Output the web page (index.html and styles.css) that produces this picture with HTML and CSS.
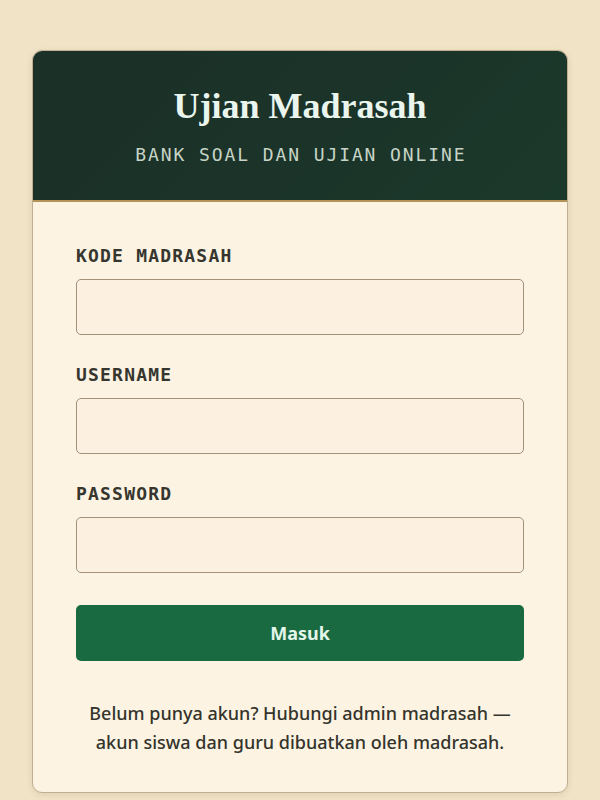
FILE: index.html
```html
<!DOCTYPE html>
<html lang="id">
<head>
<meta charset="utf-8">
<title>Ujian Madrasah</title>
<link rel="stylesheet" href="styles.css">
</head>
<body>
<main class="page">
  <section class="card">
    <header class="card-head">
      <h1 class="title">Ujian Madrasah</h1>
      <p class="subtitle">BANK SOAL DAN UJIAN ONLINE</p>
    </header>
    <form class="card-body">
      <div class="field">
        <label class="label" for="kode">KODE MADRASAH</label>
        <input class="input" id="kode" type="text">
      </div>
      <div class="field">
        <label class="label" for="user">USERNAME</label>
        <input class="input" id="user" type="text">
      </div>
      <div class="field">
        <label class="label" for="pass">PASSWORD</label>
        <input class="input" id="pass" type="password">
      </div>
      <button class="btn" type="button">Masuk</button>
      <p class="note">Belum punya akun? Hubungi admin madrasah — akun siswa dan guru dibuatkan oleh madrasah.</p>
    </form>
  </section>
</main>
</body>
</html>
```
FILE: styles.css
```css
* { box-sizing: border-box; }
html, body { margin: 0; padding: 0; }
body {
  background: #f1e4c6;
  min-height: 800px;
  font-family: "Noto Sans", "DejaVu Sans", sans-serif;
}
.page {
  padding: 50px 32px 8px;
}
.card {
  width: 536px;
  background: #fcf3e2;
  border: 1px solid #bfae90;
  border-radius: 10px;
  overflow: hidden;
  box-shadow: 0 2px 6px rgba(90, 70, 30, 0.12);
}
.card-head {
  background: linear-gradient(135deg, #1b3027 0%, #1b3429 60%, #1b392b 100%);
  border-bottom: 2px solid #b39456;
  padding: 33px 20px 35px;
  text-align: center;
}
.title {
  margin: 0;
  font-family: "Liberation Serif", "Times New Roman", serif;
  font-weight: bold;
  font-size: 36px;
  line-height: 44px;
  color: #eaf5ee;
}
.subtitle {
  margin: 17px 0 0;
  font-family: "DejaVu Sans Mono", "Liberation Mono", monospace;
  font-size: 18px;
  line-height: 20px;
  letter-spacing: 1.9px;
  padding-left: 1.9px;
  color: #c6d4c6;
}
.card-body {
  padding: 43px 43px 35px 43px;
  display: flex;
  flex-direction: column;
}
.field {
  display: flex;
  flex-direction: column;
  gap: 12px;
  margin-bottom: 29px;
}
.field:nth-of-type(3) { margin-bottom: 32px; }
.label {
  font-family: "DejaVu Sans Mono", "Liberation Mono", monospace;
  font-weight: bold;
  font-size: 18px;
  line-height: 22px;
  letter-spacing: 1.2px;
  color: #36362f;
}
.input {
  height: 56px;
  width: 100%;
  background: #fcf1e0;
  border: 1.5px solid #a39178;
  border-radius: 5px;
  font-size: 16px;
  padding: 0 14px;
  outline: none;
}
.btn {
  height: 56px;
  width: 100%;
  border: none;
  border-radius: 5px;
  background: #1a6a41;
  color: #e3f6ea;
  font-family: "Noto Sans", "DejaVu Sans", sans-serif;
  font-weight: bold;
  font-size: 18px;
  cursor: pointer;
}
.note {
  margin: 38px 0 0;
  text-align: center;
  font-size: 18px;
  font-weight: 500;
  line-height: 29px;
  color: #34342c;
  padding: 0 4px;
}
```
